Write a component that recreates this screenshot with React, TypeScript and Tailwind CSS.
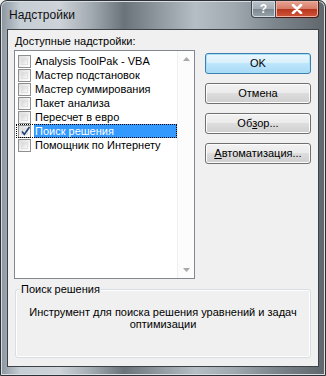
import React from 'react'

const items = [
  { label: 'Analysis ToolPak - VBA', checked: false },
  { label: 'Мастер подстановок', checked: false },
  { label: 'Мастер суммирования', checked: false },
  { label: 'Пакет анализа', checked: false },
  { label: 'Пересчет в евро', checked: false },
  { label: 'Поиск решения', checked: true, selected: true },
  { label: 'Помощник по Интернету', checked: false },
]

function CheckBox({ checked }: { checked: boolean }) {
  return (
    <div className="w-[13px] h-[13px] shrink-0 border border-[#8e8f8f] bg-[linear-gradient(135deg,#dcdcdc_0%,#f4f4f4_60%,#ffffff_100%)] p-[2px]">
      <div className="relative w-full h-full border border-[#e0e0e0] bg-[linear-gradient(135deg,#d6d6d6,#fafafa)]">
        {checked && (
          <svg viewBox="0 0 11 11" className="absolute left-[-2px] top-[-3px] w-[11px] h-[11px]">
            <path d="M2 5.5 L4.3 8.5 L9.5 1" fill="none" stroke="#1c3d78" strokeWidth="1.6" />
          </svg>
        )}
      </div>
    </div>
  )
}

function Button({ label, children, primary }: { label?: string; children?: React.ReactNode; primary?: boolean }) {
  return (
    <div
      className={`h-[21px] w-[106px] rounded-[3px] border flex items-center justify-center text-[11px] text-black ${
        primary
          ? 'border-[#3c7fb1] bg-[linear-gradient(#eaf6fd_0%,#d9f0fc_45%,#bee6fd_50%,#a7d9f5_100%)] shadow-[inset_0_0_0_1px_#a8e0f8]'
          : 'border-[#707070] bg-[linear-gradient(#f2f2f2_0%,#ebebeb_45%,#dddddd_50%,#cfcfcf_100%)] shadow-[inset_0_0_0_1px_#fcfcfc]'
      }`}
    >
      {children ?? label}
    </div>
  )
}

export default function App() {
  return (
    <div className="w-[326px] h-[376px] font-['Segoe_UI','Liberation_Sans',sans-serif] bg-[#f0f0f0]">
      <div className="w-full h-full flex flex-col rounded-t-[7px] border border-[#2c3135] bg-[linear-gradient(90deg,#8b959e_0%,#c6ced5_6%,#cdd3d8_18%,#a2aab1_28%,#6b737a_38%,#8e969d_48%,#b6bec5_60%,#a1a9b0_72%,#7f878e_84%,#5f666c_100%)] shadow-[inset_0_0_0_1px_#d7dde2]">
        <div className="h-[28px] flex items-start justify-between shrink-0">
          <span className="pl-[8px] pt-[7px] text-[12px] leading-[14px] text-[#0f0f0f]">Надстройки</span>
          <div className="flex mr-[6px]">
            <div className="w-[25px] h-[17px] rounded-bl-[4px] border border-[#3e4750] border-t-0 bg-[linear-gradient(#b9c1c8_0%,#a3acb4_50%,#7e8891_51%,#98a2aa_100%)] shadow-[inset_0_0_0_1px_#d5dbe0] flex items-center justify-center text-white font-bold text-[12px] leading-none">
              ?
            </div>
            <div className="w-[43px] h-[17px] rounded-br-[4px] border border-[#4a1a12] border-t-0 border-l-0 bg-[linear-gradient(#e8a493_0%,#d47b66_50%,#b7361c_51%,#d0553a_100%)] shadow-[inset_0_0_0_1px_#eeb2a4] flex items-center justify-center">
              <svg viewBox="0 0 12 10" className="w-[12px] h-[10px]">
                <path d="M2 1 L10 9 M10 1 L2 9" stroke="#ffffff" strokeWidth="2.6" strokeLinecap="round" />
              </svg>
            </div>
          </div>
        </div>
        <div className="flex-1 mx-[6px] mb-[8px] border border-[#3d4247] flex flex-col bg-[#f0f0f0] pb-[8px]">
          <div className="flex pl-[6px] pr-[7px] pt-[3px]">
            <div className="flex flex-col w-[181px]">
              <div className="h-[17px] pl-[1px] text-[11px] leading-[17px] text-black">
                <span className="underline">Д</span>оступные надстройки:
              </div>
              <div className="h-[229px] border border-[#828790] bg-white flex">
                <div className="flex-1 flex flex-col pt-[3px] pl-[1px]">
                  {items.map((it) => (
                    <div
                      key={it.label}
                      className={`h-[14px] flex items-center gap-[3px] pl-[2px] ${
                        it.selected ? 'outline-1 outline-dotted outline-black -outline-offset-1' : ''
                      }`}
                    >
                      <CheckBox checked={it.checked} />
                      <span
                        className={`flex-1 h-[14px] pl-[1px] text-[11px] leading-[14px] whitespace-nowrap ${
                          it.selected ? 'bg-[#3399ff] text-white' : 'text-black'
                        }`}
                      >
                        {it.label}
                      </span>
                    </div>
                  ))}
                </div>
                <div className="w-[17px] border-l border-[#f0f0f0] bg-[#fcfcfc] flex flex-col justify-between items-center py-[6px]">
                  <svg viewBox="0 0 7 4" className="w-[7px] h-[4px]">
                    <path d="M0 4 L3.5 0 L7 4 Z" fill="#a9a9a9" />
                  </svg>
                  <svg viewBox="0 0 7 4" className="w-[7px] h-[4px]">
                    <path d="M0 0 L3.5 4 L7 0 Z" fill="#a9a9a9" />
                  </svg>
                </div>
              </div>
            </div>
            <div className="ml-[10px] pt-[20px] flex flex-col gap-[9px]">
              <Button label="OK" primary />
              <Button label="Отмена" />
              <Button>
                Об<span className="underline">з</span>ор...
              </Button>
              <Button>
                <span className="underline">А</span>втоматизация...
              </Button>
            </div>
          </div>
          <div className="relative mt-[10px] mx-[7px] flex-1 rounded-[3px] border border-[#d5dfe5] shadow-[inset_0_0_0_1px_#ffffff] flex flex-col">
            <span className="absolute left-[4px] top-[-8px] bg-[#f0f0f0] px-[1px] text-[11px] leading-[14px] text-black">
              Поиск решения
            </span>
            <p className="pt-[16px] px-[10px] text-center text-[11px] leading-[12px] text-black">
              Инструмент для поиска решения уравнений и задач оптимизации
            </p>
          </div>
        </div>
      </div>
    </div>
  )
}
